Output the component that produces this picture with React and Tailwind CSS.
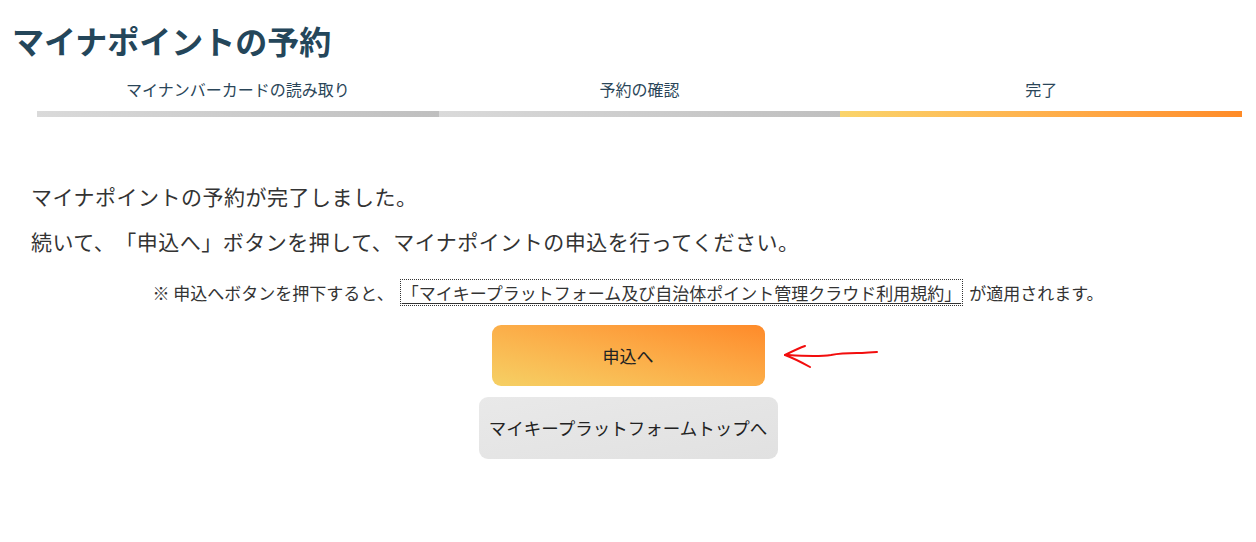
export default function App() {
  const steps = [
    { label: "マイナンバーカードの読み取り", done: false },
    { label: "予約の確認", done: false },
    { label: "完了", done: true },
  ]

  return (
    <div className="min-h-[542px] bg-white font-['Noto_Sans_CJK_JP',sans-serif] text-[#333] [text-spacing-trim:space-all]">
      {/* Header */}
      <h1 className="pl-[12px] pt-[16px] text-[32px] font-bold leading-[48px] text-[#24465a]">
        マイナポイントの予約
      </h1>

      {/* Steps */}
      <div className="mt-[13px] flex pl-[37px] pr-[14px]">
        {steps.map((step) => (
          <div key={step.label} className="flex-1">
            <div className="text-center text-[16px] leading-[24px] text-[#2a4558]">{step.label}</div>
            <div
              className={`mt-[10px] h-[6px] ${
                step.done
                  ? "bg-gradient-to-r from-[#fad46b] to-[#ff8b27]"
                  : "bg-gradient-to-r from-[#dadada] to-[#bfbfbf]"
              }`}
            />
          </div>
        ))}
      </div>

      {/* Message */}
      <div className="mt-[57px] pl-[31px] text-[21px] leading-[45px] tracking-[0.5px] text-[#333]">
        <p>マイナポイントの予約が完了しました。</p>
        <p>続いて、「申込へ」ボタンを押して、マイナポイントの申込を行ってください。</p>
      </div>

      {/* Note */}
      <p className="mt-[16px] text-center text-[17px] leading-[26px] text-[#333]">
        ※ 申込へボタンを押下すると、
        <a className="mx-[6px] border border-dotted border-[#333] px-[1px] underline underline-offset-[3px]">
          「マイキープラットフォーム及び自治体ポイント管理クラウド利用規約」
        </a>
        が適用されます。
      </p>

      {/* Buttons */}
      <div className="mt-[19px] flex flex-col items-center gap-[11px]">
        <div className="relative">
          <button className="h-[61px] w-[273px] rounded-[9px] bg-gradient-to-tr from-[#f5d064] to-[#fe8a29] text-[17px] text-[#222]">
            申込へ
          </button>
          <svg
            className="absolute left-[291px] top-[20px]"
            width="100"
            height="30"
            viewBox="0 0 100 30"
            fill="none"
            stroke="#f20d0d"
            strokeWidth="2"
            strokeLinecap="round"
            strokeLinejoin="round"
          >
            <path d="M2 10 C 10 6, 16 3, 22 1" />
            <path d="M2 10 C 10 13, 18 17, 27 22" />
            <path d="M3 10 C 20 11, 35 12, 48 10 C 58 8, 66 8, 74 8 C 82 8, 88 7, 94 7" />
          </svg>
        </div>
        <button className="h-[62px] w-[299px] rounded-[9px] bg-gradient-to-br from-[#e9e9e9] to-[#e1e1e1] text-[17.5px] text-[#222]">
          マイキープラットフォームトップへ
        </button>
      </div>
    </div>
  )
}
